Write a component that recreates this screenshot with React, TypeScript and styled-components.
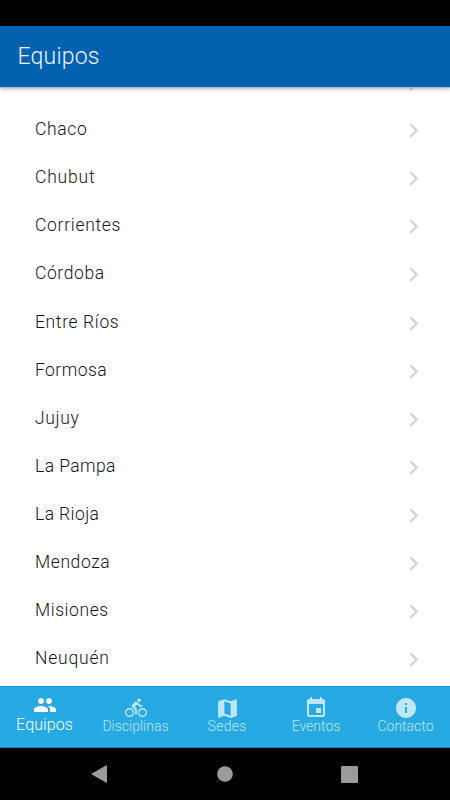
import React from "react";
import styled, { createGlobalStyle } from "styled-components";
import {
  MdChevronRight,
  MdDirectionsBike,
  MdEvent,
  MdInfo,
  MdMap,
  MdPeople,
} from "react-icons/md";

const GlobalStyle = createGlobalStyle`
  * { box-sizing: border-box; }
  body { margin: 0; background: #000; }
`;

const Screen = styled.div`
  display: flex;
  flex-direction: column;
  width: 450px;
  height: 800px;
  overflow: hidden;
  background: #fff;
  font-family: Roboto, "Liberation Sans", sans-serif;
  font-weight: 300;
`;

const StatusBar = styled.div`
  flex: 0 0 26px;
  background: #000;
`;

const Header = styled.header`
  z-index: 1;
  flex: 0 0 61px;
  display: flex;
  align-items: center;
  padding-left: 17.5px;
  background: #0061af;
  box-shadow: 0 1px 0 #9fb8dc, 0 2px 4px rgba(0, 0, 0, 0.3);
`;

const Title = styled.h1`
  margin: 0;
  color: #f0f0ff;
  font-size: 23px;
  font-weight: 300;
  line-height: 28px;
  letter-spacing: 0.2px;
`;

const List = styled.ul`
  flex: 1 1 0;
  min-height: 0;
  margin: 0;
  padding: 0;
  overflow: hidden;
  list-style: none;
`;

const Row = styled.li`
  display: flex;
  align-items: center;
  justify-content: space-between;
  height: 48.13px;
  padding: 0 22px 0 35px;
  color: #151515;

  &:first-child {
    justify-content: flex-end;
    margin-top: -30.1px;
  }

  svg {
    margin-top: 3px;
    color: #d6d6d6;
  }

  &:first-child svg {
    margin-top: 5px;
  }
`;

const Name = styled.span<{ $tracking: number }>`
  font-size: 17.5px;
  line-height: 24px;
  letter-spacing: ${({ $tracking }) => $tracking}px;
`;

const Tabs = styled.nav`
  flex: 0 0 62px;
  display: grid;
  grid-template-columns: 89px 93px 90px 88px 91px;
  border-top: 1px solid #1b93d2;
  border-bottom: 1px solid #1781b6;
  background: #27a9e3;
`;

const Tab = styled.a<{ $active: boolean }>`
  display: flex;
  flex-direction: column;
  align-items: center;
  padding-top: ${({ $active }) => ($active ? 6 : 9)}px;
  color: ${({ $active }) => ($active ? "#fff" : "#bfe6f8")};

  svg {
    flex: none;
  }
`;

const IconBox = styled.span`
  display: grid;
  place-items: center;
  height: 24px;
`;

const TabLabel = styled.span<{ $active: boolean; $tracking: number }>`
  margin-top: ${({ $active }) => ($active ? -1 : -3)}px;
  margin-right: ${({ $tracking }) => -$tracking}px;
  font-size: ${({ $active }) => ($active ? 16 : 14)}px;
  line-height: 18px;
  letter-spacing: ${({ $tracking }) => $tracking}px;
`;

const SystemBar = styled.footer`
  flex: 0 0 52px;
  display: flex;
  align-items: center;
  justify-content: space-between;
  padding: 0 92px 0 90px;
  background: #000;
  color: #9b9b9b;
`;

const teams = [
  { name: "Chaco", tracking: 0.65 },
  { name: "Chubut", tracking: 0.8 },
  { name: "Corrientes", tracking: 0.7 },
  { name: "Córdoba", tracking: 0.6 },
  { name: "Entre Ríos", tracking: 0.64 },
  { name: "Formosa", tracking: 0.45 },
  { name: "Jujuy", tracking: 0.65 },
  { name: "La Pampa", tracking: 0.42 },
  { name: "La Rioja", tracking: 0.4 },
  { name: "Mendoza", tracking: 0.6 },
  { name: "Misiones", tracking: 0.56 },
  { name: "Neuquén", tracking: 0.8 },
];

const tabs = [
  { label: "Equipos", Icon: MdPeople, size: 24, tracking: 0.1 },
  { label: "Disciplinas", Icon: MdDirectionsBike, size: 22, tracking: 0 },
  { label: "Sedes", Icon: MdMap, size: 25, tracking: 0.3 },
  { label: "Eventos", Icon: MdEvent, size: 24, tracking: 0 },
  { label: "Contacto", Icon: MdInfo, size: 24, tracking: 0 },
];

export default function App() {
  return (
    <>
      <GlobalStyle />
      <Screen>
        <StatusBar />
        <Header>
          <Title>Equipos</Title>
        </Header>
        <List>
          <Row>
            <MdChevronRight size={29} />
          </Row>
          {teams.map(({ name, tracking }) => (
            <Row key={name}>
              <Name $tracking={tracking}>{name}</Name>
              <MdChevronRight size={29} />
            </Row>
          ))}
        </List>
        <Tabs>
          {tabs.map(({ label, Icon, size, tracking }, i) => (
            <Tab key={label} $active={i === 0}>
              <IconBox>
                <Icon size={size} />
              </IconBox>
              <TabLabel $active={i === 0} $tracking={tracking}>
                {label}
              </TabLabel>
            </Tab>
          ))}
        </Tabs>
        <SystemBar>
          <svg width="18" height="18" viewBox="0 0 18 18" fill="currentColor">
            <path d="M1 9 16.3 0.2Q17 0 17 0.6V17.4Q17 18 16.3 17.8Z" />
          </svg>
          <svg width="16" height="16" viewBox="0 0 16 16" fill="currentColor">
            <circle cx="8" cy="8" r="7.8" />
          </svg>
          <svg width="17" height="17" viewBox="0 0 17 17" fill="currentColor">
            <rect width="17" height="17" rx="1.3" />
          </svg>
        </SystemBar>
      </Screen>
    </>
  );
}
